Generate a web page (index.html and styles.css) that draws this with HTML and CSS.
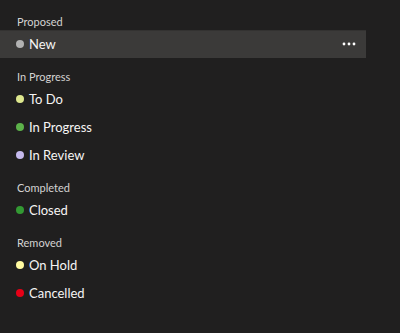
FILE: index.html
```html
<!DOCTYPE html>
<html>
<head>
<meta charset="utf-8">
<link rel="stylesheet" href="styles.css">
</head>
<body>
<div class="states">
  <div class="group">
    <div class="group-label">Proposed</div>
    <div class="item selected">
      <span class="dot dot-new"></span>
      <span class="name">New</span>
      <span class="more">
        <svg width="14" height="4" viewBox="0 0 14 4"><circle cx="2" cy="2" r="1.4" fill="#fff"/><circle cx="7" cy="2" r="1.4" fill="#fff"/><circle cx="12" cy="2" r="1.4" fill="#fff"/></svg>
      </span>
    </div>
  </div>
  <div class="group">
    <div class="group-label">In Progress</div>
    <div class="item"><span class="dot dot-todo"></span><span class="name">To Do</span></div>
    <div class="item"><span class="dot dot-progress"></span><span class="name">In Progress</span></div>
    <div class="item"><span class="dot dot-review"></span><span class="name">In Review</span></div>
  </div>
  <div class="group">
    <div class="group-label">Completed</div>
    <div class="item"><span class="dot dot-closed"></span><span class="name">Closed</span></div>
  </div>
  <div class="group">
    <div class="group-label">Removed</div>
    <div class="item"><span class="dot dot-hold"></span><span class="name">On Hold</span></div>
    <div class="item"><span class="dot dot-cancel"></span><span class="name">Cancelled</span></div>
  </div>
</div>
</body>
</html>
```
FILE: styles.css
```css
html, body {
  margin: 0;
  padding: 0;
  background: #201f1f;
  height: 100%;
}
body {
  font-family: Lato, "Noto Sans", sans-serif;
  color: #f6f5f4;
}
.states {
  width: 366px;
  padding-top: 14px;
}
.group + .group {
  margin-top: 11px;
}
.group-label {
  padding-left: 17px;
  font-size: 11px;
  line-height: 16px;
  color: #d4d3d2;
}
.item {
  height: 28px;
  display: flex;
  align-items: center;
  padding: 0 10px 0 16px;
  gap: 5px;
  font-size: 13px;
}
.item.selected {
  background: #3b3a39;
  box-shadow: inset 0 1px 0 #333231;
}
.name {
  flex: 1;
}
.more {
  display: flex;
  align-items: center;
}
.more svg {
  display: block;
}
.dot {
  width: 8px;
  height: 8px;
  border-radius: 50%;
  flex: none;
}
.dot-new { background: #b2b2b2; }
.dot-todo { background: #dde78e; }
.dot-progress { background: #5cb14a; }
.dot-review { background: #c4b9ed; }
.dot-closed { background: #339933; }
.dot-hold { background: #fffaa0; }
.dot-cancel { background: #e60017; }
```
